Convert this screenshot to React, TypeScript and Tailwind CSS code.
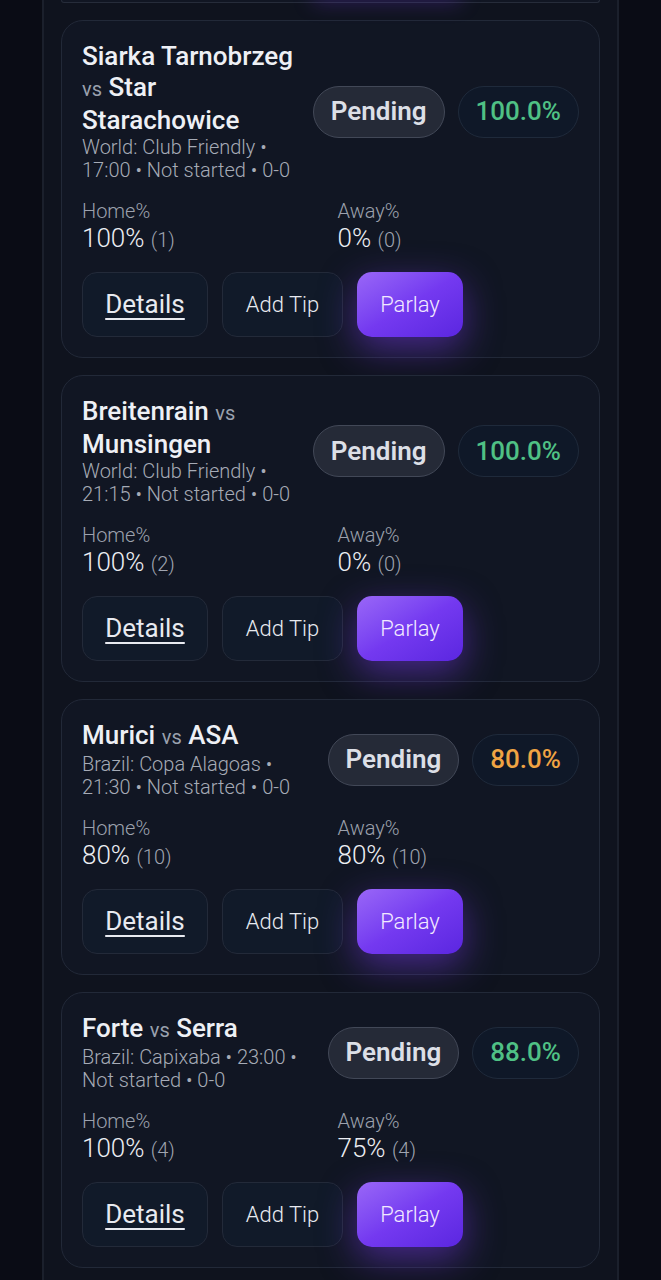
import React from "react";

type Match = {
  home: string;
  away: string;
  meta: string;
  pct: string;
  pctColor: string;
  homePct: string;
  homeN: string;
  awayPct: string;
  awayN: string;
};

const matches: Match[] = [
  {
    home: "Siarka Tarnobrzeg",
    away: "Star Starachowice",
    meta: "World: Club Friendly • 17:00 • Not started • 0-0",
    pct: "100.0%",
    pctColor: "text-[#4fc185]",
    homePct: "100%",
    homeN: "(1)",
    awayPct: "0%",
    awayN: "(0)",
  },
  {
    home: "Breitenrain",
    away: "Munsingen",
    meta: "World: Club Friendly • 21:15 • Not started • 0-0",
    pct: "100.0%",
    pctColor: "text-[#4fc185]",
    homePct: "100%",
    homeN: "(2)",
    awayPct: "0%",
    awayN: "(0)",
  },
  {
    home: "Murici",
    away: "ASA",
    meta: "Brazil: Copa Alagoas • 21:30 • Not started • 0-0",
    pct: "80.0%",
    pctColor: "text-[#f0a443]",
    homePct: "80%",
    homeN: "(10)",
    awayPct: "80%",
    awayN: "(10)",
  },
  {
    home: "Forte",
    away: "Serra",
    meta: "Brazil: Capixaba • 23:00 • Not started • 0-0",
    pct: "88.0%",
    pctColor: "text-[#4fc185]",
    homePct: "100%",
    homeN: "(4)",
    awayPct: "75%",
    awayN: "(4)",
  },
];

function Card({ m }: { m: Match }) {
  return (
    <div className="rounded-[22px] border border-[#222938] bg-[#111623] px-[20px] pt-[20px] pb-[20px]">
      <div className="flex items-center gap-[16px]">
        <div className="min-w-0 flex-1">
          <div className="text-[26px] font-medium leading-[31px] text-[#eef0f5]">
            {m.home} <span className="text-[20px] font-normal text-[#9aa1ae]">vs</span> {m.away}
          </div>
          <div className="text-[20px] font-light leading-[23px] text-[#a6abb6]">{m.meta}</div>
        </div>
        <div className="flex shrink-0 items-center gap-[13px]">
          <div className="flex h-[52px] items-center rounded-full border border-[#424857] bg-[#252a37] px-[17px] text-[26px] font-semibold text-[#dcdfe6]">
            Pending
          </div>
          <div className={`flex h-[52px] items-center rounded-full border border-[#1f2a3b] bg-[#0f1828] px-[17px] text-[26px] font-medium ${m.pctColor}`}>
            {m.pct}
          </div>
        </div>
      </div>
      <div className="mt-[18px] grid grid-cols-2 gap-x-[14px]">
        <div>
          <div className="text-[20px] font-light leading-[23px] text-[#9ca1ad]">Home%</div>
          <div className="text-[26px] font-light leading-[31px] text-[#eceef3]">
            {m.homePct} <span className="text-[20px] text-[#a0a5b1]">{m.homeN}</span>
          </div>
        </div>
        <div>
          <div className="text-[20px] font-light leading-[23px] text-[#9ca1ad]">Away%</div>
          <div className="text-[26px] font-light leading-[31px] text-[#eceef3]">
            {m.awayPct} <span className="text-[20px] text-[#a0a5b1]">{m.awayN}</span>
          </div>
        </div>
      </div>
      <div className="mt-[16px] flex gap-[14px]">
        <button className="flex h-[65px] w-[126px] items-center justify-center rounded-[15px] border border-[#232a39] bg-[#111a29] text-[26px] font-normal text-[#e8eaf0] underline decoration-[2px] underline-offset-[5px]">
          Details
        </button>
        <button className="flex h-[65px] w-[121px] items-center justify-center rounded-[15px] border border-[#232a39] bg-[#111a29] text-[22px] font-light text-[#e8eaf0]">
          Add Tip
        </button>
        <button className="flex h-[65px] w-[106px] items-center justify-center rounded-[15px] bg-gradient-to-br from-[#9a66f7] via-[#7439f0] to-[#5b26e0] text-[22px] font-light text-[#f2eaff] shadow-[0_12px_36px_rgba(124,58,237,0.5)]">
          Parlay
        </button>
      </div>
    </div>
  );
}

export default function App() {
  return (
    <div
      className="min-h-[1280px] w-full bg-[#0a0c15]"
      style={{ fontFamily: "Roboto, 'Noto Sans', sans-serif" }}
    >
      <div className="mx-[42px] min-h-[1280px] border-x-2 border-[#1b202c] bg-[#0f131e] px-[17px]">
        <div className="relative h-[3px] rounded-b-[20px] border-x border-b border-[#262c3a] bg-[#111623]">
          <div className="absolute left-[250px] top-[-10px] h-[12px] w-[150px] rounded-full bg-[rgba(124,58,237,0.35)] blur-[10px]" />
        </div>
        <div className="flex flex-col gap-[17px] pt-[17px]">
          {matches.map((m, i) => (
            <Card key={i} m={m} />
          ))}
        </div>
      </div>
    </div>
  );
}
